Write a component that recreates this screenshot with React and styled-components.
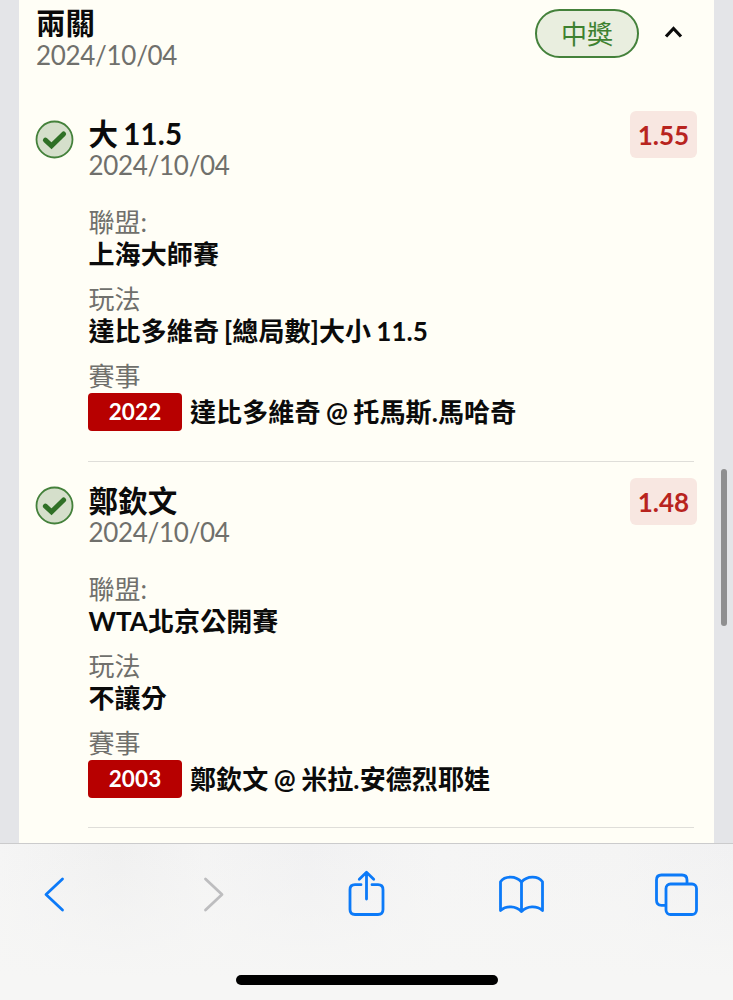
import React, { useState } from "react";
import styled, { createGlobalStyle } from "styled-components";

const GlobalStyle = createGlobalStyle`
  * { box-sizing: border-box; }
  body {
    margin: 0;
    overflow: hidden;
    background: #fff;
    color: #0b0b0b;
    font-family: Lato, "Noto Sans CJK TC", sans-serif;
    font-size: 26px;
    line-height: 32px;
  }
`

const Screen = styled.div`
  position: relative;
  display: flex;
  flex-direction: column;
  width: 733px;
  height: 1000px;
`

const Page = styled.main`
  height: 843px;
  padding: 0 19px;
  background: #e4e5e8;
  overflow: hidden;
`

const Ticket = styled.section`
  height: 100%;
  padding-left: 17px;
  background: #fffef6;
`

const TicketHeader = styled.header`
  display: flex;
  align-items: flex-start;
  height: 95px;
  padding-top: 9px;
`

const Title = styled.h2`
  margin: 0;
  font-size: 29.5px;
  font-weight: 700;
  line-height: 31px;
  letter-spacing: 0.1px;
  word-spacing: -2px;
  white-space: nowrap;
`

const DateText = styled.div`
  padding-top: 1px;
  color: #70706c;
  line-height: 31px;
  letter-spacing: -0.3px;
`

const Heading = styled.div`
  flex: 1;
  margin-top: -2px;

  ${DateText} {
    padding-top: 2px;
  }
`

const Status = styled.div`
  display: flex;
  align-items: center;
  justify-content: center;
  width: 104px;
  height: 49px;
  border: 2px solid #44813b;
  border-radius: 25px;
  background: #e9eedf;
  color: #3d8130;
  line-height: 34px;
`

const Toggle = styled.button`
  display: flex;
  margin: 14px 30px 0 24px;
  padding: 0;
  border: 0;
  background: none;
`

const Leg = styled.article`
  display: flex;
  align-items: flex-start;
  height: 366.6px;
  padding-top: 16px;
`

const LegCheck = styled.svg`
  flex: none;
  margin: 8.5px 14px 0 -1px;
`

const LegBody = styled.div`
  width: 606px;
  height: 100%;
  border-bottom: 1px solid #dfded9;
`

const LegTop = styled.div`
  display: flex;
  justify-content: space-between;
  height: 95px;
  margin-right: -3px;
`

const LegName = styled.div`
  padding: 7px 0 0 0.5px;
`

const Odds = styled.div`
  width: 67px;
  height: 47px;
  border-radius: 6px;
  background: #f8e7e1;
  color: #b8241e;
  font-weight: 700;
  line-height: 48px;
  text-align: center;
`

const Field = styled.div`
  height: 77px;
`

const Label = styled.div`
  padding-left: 0.5px;
  color: #70706c;
`

const Value = styled.div`
  padding-left: 0.5px;
  font-weight: 700;
  white-space: nowrap;
  letter-spacing: 0.1px;
  word-spacing: -1.3px;
`

const Match = styled(Value)`
  display: flex;
  align-items: center;
  padding: 0;
  line-height: 41px;
  word-spacing: -1px;
`

const MatchNo = styled.span`
  width: 94px;
  height: 38px;
  margin: -1px 8px 0 0;
  border-radius: 4px;
  background: #b70000;
  color: #fff;
  font-size: 22.5px;
  line-height: 38px;
  text-align: center;
`

const ScrollThumb = styled.div`
  position: absolute;
  top: 469px;
  right: 6px;
  width: 6px;
  height: 157px;
  border-radius: 3px;
  background: #8f8f90;
`

const BottomBar = styled.footer`
  display: flex;
  flex-direction: column;
  align-items: center;
  justify-content: space-between;
  height: 157px;
  padding-bottom: 15px;
  border-top: 1px solid #cbcbcc;
  background: linear-gradient(180deg, rgba(246, 246, 245, 0), #f6f6f5 85%),
    linear-gradient(90deg, #f5f5f5, #f0f0f0 16%, #f4f4f4 28%, #f1f1f2 42%, #f5f5f5 60%, #f4f4f4 85%, #f1f1f2);
`

const Tools = styled.nav`
  display: flex;
  align-items: center;
  justify-content: space-between;
  width: 100%;
  height: 102px;
  padding: 0 34px 0 31px;
`

const Tool = styled.button`
  display: flex;
  padding: 0;
  border: 0;
  background: none;
  color: ${props => props.$disabled ? "#bdbdbf" : "#0c7af8"};

  svg {
    fill: none;
    stroke: currentColor;
    stroke-width: 2.8;
    stroke-linecap: round;
    stroke-linejoin: round;
  }
`

const HomeIndicator = styled.div`
  width: 262px;
  height: 10px;
  border-radius: 5px;
  background: #000;
`

const legs = [
  {
    name: "大 11.5",
    date: "2024/10/04",
    odds: "1.55",
    league: "上海大師賽",
    play: "達比多維奇 [總局數]大小 11.5",
    matchNo: "2022",
    match: "達比多維奇 @ 托馬斯.馬哈奇",
  },
  {
    name: "鄭欽文",
    date: "2024/10/04",
    odds: "1.48",
    league: "WTA北京公開賽",
    play: "不讓分",
    matchNo: "2003",
    match: "鄭欽文 @ 米拉.安德烈耶娃",
  },
]

function LegItem({ leg }) {
  return (
    <Leg>
      <LegCheck width="39" height="39" viewBox="0 0 39 39">
        <circle cx="19.5" cy="19.5" r="18" fill="#d5dfcb" stroke="#44813b" strokeWidth="1.8" />
        <path d="M10.4 20.2L16.5 25.8L28.6 14" fill="none" stroke="#2f7026" strokeWidth="5" strokeLinecap="round" strokeLinejoin="miter" />
      </LegCheck>
      <LegBody>
        <LegTop>
          <LegName>
            <Title>{leg.name}</Title>
            <DateText>{leg.date}</DateText>
          </LegName>
          <Odds>{leg.odds}</Odds>
        </LegTop>
        <Field>
          <Label>聯盟:</Label>
          <Value>{leg.league}</Value>
        </Field>
        <Field>
          <Label>玩法</Label>
          <Value>{leg.play}</Value>
        </Field>
        <Field>
          <Label>賽事</Label>
          <Match>
            <MatchNo>{leg.matchNo}</MatchNo>
            {leg.match}
          </Match>
        </Field>
      </LegBody>
    </Leg>
  )
}

function App() {
  const [open, setOpen] = useState(true)

  return (
    <>
      <GlobalStyle />
      <Screen>
        <Page>
          <Ticket>
            <TicketHeader>
              <Heading>
                <Title>兩關</Title>
                <DateText>2024/10/04</DateText>
              </Heading>
              <Status>中獎</Status>
              <Toggle onClick={() => setOpen(!open)} aria-label="toggle">
                <svg width="21" height="20" viewBox="0 0 21 20">
                  <path d="M3 13.5L10.5 5.5L18 13.5" fill="none" stroke="#0b0b0b" strokeWidth="3.2" />
                </svg>
              </Toggle>
            </TicketHeader>
            {open && legs.map(leg => <LegItem key={leg.matchNo} leg={leg} />)}
          </Ticket>
        </Page>
        <ScrollThumb />
        <BottomBar>
          <Tools>
            <Tool aria-label="back">
              <svg width="46" height="50" viewBox="31 870 46 50">
                <path d="M62.5 879L46 894.5L62.5 910" />
              </svg>
            </Tool>
            <Tool $disabled aria-label="forward">
              <svg width="46" height="50" viewBox="187 870 46 50">
                <path d="M205.5 879L222 894.5L205.5 910" />
              </svg>
            </Tool>
            <Tool aria-label="share">
              <svg width="46" height="50" viewBox="342 870 46 50">
                <path d="M361 884.7H355Q350 884.7 350 889.7V909.5Q350 914.5 355 914.5H378Q383 914.5 383 909.5V889.7Q383 884.7 378 884.7H372M366.5 899V873M359.3 879.3L366.5 872.3L373.7 879.3" />
              </svg>
            </Tool>
            <Tool aria-label="bookmarks">
              <svg width="46" height="50" viewBox="498 870 46 50">
                <path d="M521.5 882C516 875.5 505 875.5 500.5 881.7V910.5C506 905.5 516 905.5 521.5 911.5C527 905.5 537 905.5 542.5 910.5V881.7C538 875.5 527 875.5 521.5 882V911" />
              </svg>
            </Tool>
            <Tool aria-label="tabs">
              <svg width="46" height="50" viewBox="653 870 46 50">
                <path d="M665 905.3H661.5Q656.5 905.3 656.5 900.3V880Q656.5 875 661.5 875H682Q687 875 687 880V883.5" />
                <rect x="666" y="884" width="30.5" height="30.5" rx="4.5" />
              </svg>
            </Tool>
          </Tools>
          <HomeIndicator />
        </BottomBar>
      </Screen>
    </>
  )
}

export default App;
